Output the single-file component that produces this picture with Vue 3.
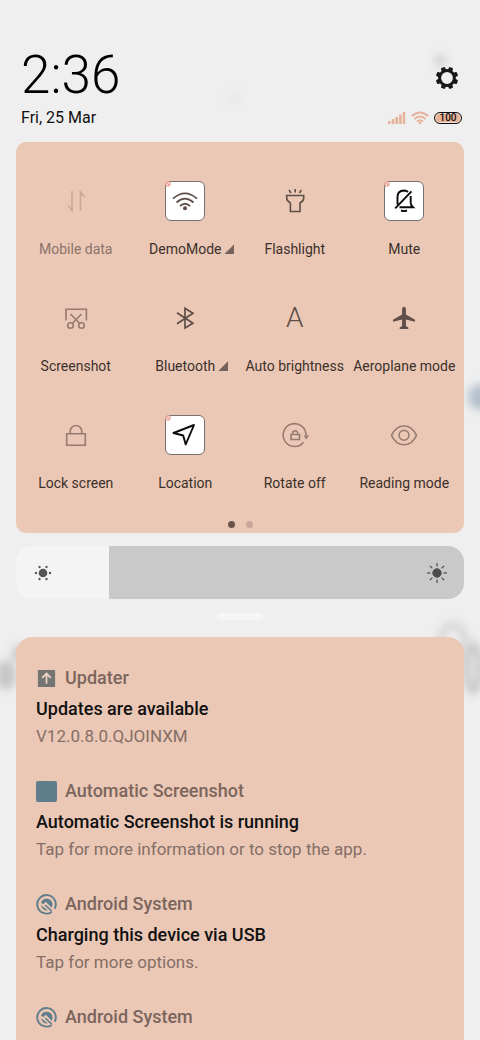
<script setup>
import { ref } from 'vue'

const tiles = ref([
  { id: 'data', label: 'Mobile data', tone: 'faint', disabled: true },
  { id: 'wifi', label: 'DemoMode', on: true, tone: 'dark', more: true },
  { id: 'torch', label: 'Flashlight', tone: 'dark' },
  { id: 'mute', label: 'Mute', on: true, tone: 'black' },
  { id: 'shot', label: 'Screenshot', tone: 'mid' },
  { id: 'bluetooth', label: 'Bluetooth', tone: 'dark', more: true },
  { id: 'auto', label: 'Auto brightness', tone: 'dark' },
  { id: 'plane', label: 'Aeroplane mode', tone: 'dark' },
  { id: 'lock', label: 'Lock screen', tone: 'mid' },
  { id: 'location', label: 'Location', on: true, tone: 'black' },
  { id: 'rotate', label: 'Rotate off', tone: 'mid' },
  { id: 'reading', label: 'Reading mode', tone: 'mid' },
])

const page = ref(0)
const brightness = ref(208)

const notifications = [
  { icon: 'update', app: 'Updater', title: 'Updates are available', body: 'V12.0.8.0.QJOINXM' },
  { icon: 'square', app: 'Automatic Screenshot', title: 'Automatic Screenshot is running', body: 'Tap for more information or to stop the app.' },
  { icon: 'system', app: 'Android System', title: 'Charging this device via USB', body: 'Tap for more options.' },
  { icon: 'system', app: 'Android System', title: 'USB debugging connected' },
]
</script>

<template>
  <main class="shade">
    <div class="wallpaper" aria-hidden="true">
      <i class="smudge s1"></i><i class="smudge s2"></i><i class="smudge s3"></i>
      <i class="smudge s4"></i><i class="smudge s5"></i><i class="smudge s6"></i><i class="smudge s7"></i>
    </div>

    <header class="header">
      <div class="row">
        <time class="clock">2:36</time>
        <button class="settings" type="button" aria-label="Settings">
          <svg viewBox="0 0 24 24" width="24" height="24">
            <circle cx="12" cy="12" r="7.4" fill="none" stroke="#191919" stroke-width="3" />
            <g fill="#191919">
              <rect v-for="n in 8" :key="n" x="9.8" y="0.8" width="4.4" height="4" rx="1" :transform="`rotate(${n * 45 + 22.5} 12 12)`" />
            </g>
          </svg>
        </button>
      </div>
      <div class="row status">
        <span class="date">Fri, 25 Mar</span>
        <span class="indicators">
          <svg viewBox="0 0 18 14" width="18" height="14" fill="#e5b299">
            <rect x="0" y="10" width="2.6" height="3" /><rect x="3.7" y="8" width="2.6" height="5" />
            <rect x="7.4" y="6" width="2.6" height="7" /><rect x="11.1" y="3.5" width="2.6" height="9.5" />
            <rect x="14.8" y="1" width="2.4" height="12" />
          </svg>
          <svg viewBox="0 0 18 14" width="18" height="14" fill="none" stroke="#e5b299" stroke-width="1.9">
            <path d="M.8 5.2Q9-2.4 17.2 5.2M3.5 8Q9 3 14.5 8M6 10.6Q9 8 12 10.6" />
            <circle cx="9" cy="12" r="1.3" fill="#e5b299" stroke="none" />
          </svg>
          <span class="battery">100</span>
        </span>
      </div>
    </header>

    <section class="panel" aria-label="Quick settings">
      <div class="tiles">
        <button v-for="t in tiles" :key="t.id" type="button" class="tile" :disabled="t.disabled" :aria-pressed="!!t.on">
          <span class="icon" :class="[t.tone, { on: t.on }]">
            <span v-if="t.id === 'auto'" class="letter">A</span>
            <svg v-else viewBox="0 0 40 40" width="40" height="40" fill="none" stroke="currentColor" stroke-width="1.6">
              <path v-if="t.id === 'data'" d="M16 10v19.5l-4-5M24.500 30V11l4 5" />
              <g v-else-if="t.id === 'wifi'" stroke-width="1.7">
                <path d="M8 17.700Q20 7 32 17.700M11.500 21.500Q20 13.700 28.500 21.500M15 25Q20 20.500 25 25" />
                <circle cx="20" cy="27.300" r="2" fill="currentColor" stroke="none" />
              </g>
              <path v-else-if="t.id === 'torch'" d="M11.700 14.500h17v2.500q0 3-3.700 5v8.500h-9.600V22q-3.700-2-3.700-5zM20.200 8v3.600M14 9l2 3M26.400 9l-2 3" />
              <g v-else-if="t.id === 'mute'" stroke-width="1.900">
                <path d="M13.500 23.500V16q0-6.200 6.500-6.500 2.500.1 4 1.500M26.700 15v7q0 2.200 2.300 4.200H15.500M11.200 27.300 27.500 10.300M17 29.300q3 1.600 6 0" />
              </g>
              <g v-else-if="t.id === 'shot'">
                <path d="M10 22.500V11.300h20.400v11.200M25.500 16 16.300 25.500M14.500 16l9.200 9.500" />
                <circle cx="14.500" cy="27.500" r="2.800" /><circle cx="25.500" cy="27.500" r="2.800" />
              </g>
              <path v-else-if="t.id === 'bluetooth'" stroke-width="1.700" d="m12 14.700 16 10.600-8 4.800V10.200l8 5-16 10.500" />
              <path v-else-if="t.id === 'plane'" fill="currentColor" stroke="none" d="M20 8.700q1.900 0 1.900 2.200v5.700l9.100 5.200v1.900l-9.100-2.200v6.400l2.400 1.600v1.500h-8.600v-1.500l2.400-1.600v-6.400L9 23.700v-1.900l9.100-5.200v-5.700q0-2.200 1.900-2.200z" />
              <path v-else-if="t.id === 'lock'" d="M10.700 18.700h18.600v11.600H10.700zM14.300 18.700v-2.500a5.700 5.700 0 0 1 11.400 0v2.500" />
              <path v-else-if="t.id === 'location'" stroke-width="1.900" stroke-linejoin="round" d="M8.500 18 29 10 20.700 29.500 18.200 20.500z" />
              <g v-else-if="t.id === 'rotate'">
                <path d="M28.500 27.200A11.400 11.400 0 1 1 31 20.500M16 19.500h8.500v5H16zM17.700 19.500v-1.200a2.500 2.500 0 0 1 5 0v1.200" />
                <path d="M28.500 20.500h5.600l-2.800 4z" fill="currentColor" stroke="none" />
              </g>
              <g v-else>
                <path d="M7.500 20.300Q12 11 20 11t12.500 9.300Q28 29.700 20 29.700T7.500 20.300z" />
                <circle cx="20" cy="20.300" r="4.900" />
              </g>
            </svg>
            <svg v-if="t.on" class="badge" viewBox="0 0 6 6" width="6" height="6" fill="#fbe5df" stroke="#e58f84">
              <circle cx="3" cy="3" r="2.300" /><path d="m1.500 1.500 3 3" />
            </svg>
          </span>
          <span class="label">{{ t.label }}<i v-if="t.more" class="more"></i></span>
        </button>
      </div>
      <nav class="pages" aria-label="Pages">
        <button v-for="n in 2" :key="n" type="button" class="dot" :class="{ current: page === n - 1 }" :aria-label="`Page ${n}`" @click="page = n - 1"></button>
      </nav>
    </section>

    <label class="brightness">
      <input v-model.number="brightness" type="range" min="0" max="1000" aria-label="Brightness" :style="{ '--level': brightness / 10 + '%' }" />
      <svg class="dim" viewBox="0 0 22 22" width="22" height="22" fill="#555">
        <circle cx="11" cy="11" r="4.300" />
        <circle v-for="n in 6" :key="n" cx="18" cy="11" r="1.200" :transform="`rotate(${n * 60} 11 11)`" />
      </svg>
      <svg class="bright" viewBox="0 0 22 22" width="22" height="22" fill="#4c4c4c" stroke="#4c4c4c">
        <circle cx="11" cy="11" r="4.200" />
        <path v-for="n in 8" :key="n" d="M17.500 11H21" stroke-width="1.200" :transform="`rotate(${n * 45} 11 11)`" />
      </svg>
    </label>

    <div class="handle"></div>

    <section class="notifications" aria-label="Notifications">
      <article v-for="(n, i) in notifications" :key="i" class="note">
        <div class="app">
          <svg viewBox="0 0 22 22" width="21" height="21">
            <g v-if="n.icon === 'update'">
              <rect x="2" y="2" width="18" height="18" rx="1" fill="#747473" />
              <path d="M11 16.500V6M6.500 10.300 11 5.800l4.500 4.500" fill="none" stroke="#f2d5c6" stroke-width="1.800" />
            </g>
            <rect v-else-if="n.icon === 'square'" width="22" height="22" rx="2" fill="#607d8b" />
            <g v-else fill="none" stroke="#607d8b">
              <path d="M16.500 18.800A9.700 9.700 0 1 1 19.500 15.500" stroke-width="2" />
              <path d="M5.200 9A6.300 6.300 0 0 1 16.800 8.500 6.300 6.300 0 0 1 16.300 14.300L10.300 8 7.600 10.800z" fill="#607d8b" stroke="none" />
              <path d="M5 11.500 12.500 17.300Q7 18 5 11.500z" fill="#607d8b" stroke="none" />
              <path d="m9.500 11.500 7 6.500" stroke-width="1.600" />
            </g>
          </svg>
          <span>{{ n.app }}</span>
        </div>
        <h2>{{ n.title }}</h2>
        <p v-if="n.body">{{ n.body }}</p>
      </article>
    </section>
  </main>
</template>

<style>
body { background: #efefef; }
</style>

<style scoped>
* { box-sizing: border-box; }
.shade {
  position: relative;
  display: flex;
  flex-direction: column;
  height: 100vh;
  padding: 44px 16px 0;
  overflow: hidden;
  background: #efefef;
  color: #111;
  font-family: Roboto, "Liberation Sans", sans-serif;
}
.shade > :not(.wallpaper) { position: relative; flex-shrink: 0; }
button { padding: 0; border: 0; background: none; color: inherit; font: inherit; }
svg { display: block; }

.wallpaper { position: absolute; inset: 0; overflow: hidden; }
.smudge { position: absolute; border-radius: 50%; filter: blur(4px); }
.s1 { top: 55px; right: 34px; width: 11px; height: 11px; background: #ccc; }
.s2 { top: 94px; left: 231px; width: 8px; height: 8px; background: #e3e3e3; }
.s3 { top: 384px; right: -14px; width: 26px; height: 26px; background: #b4c0cc; }
.s4 { top: 660px; left: -4px; width: 20px; height: 30px; background: #c6c6c6; }
.s5 { top: 645px; left: 12px; width: 12px; height: 18px; background: #c4c4c4; }
.s6 { top: 622px; right: 12px; width: 30px; height: 36px; border: 6px solid #d0d0d0; }
.s7 { top: 642px; right: -4px; width: 22px; height: 52px; border: 8px solid #c4c4c4; }

.header { padding: 0 2px 0 5px; }
.row { display: flex; align-items: center; justify-content: space-between; }
.clock { font-size: 53px; font-weight: 300; line-height: 62px; color: #000; }
.settings { padding: 6px 3px 0; }
.status { height: 24px; }
.date { font-size: 16px; line-height: 24px; }
.indicators { display: flex; align-items: center; gap: 5px; }
.battery {
  width: 28px;
  height: 12px;
  border: 1px solid #111;
  border-radius: 6px;
  background: #e9b296;
  box-shadow: inset 0 0 0 1px #f3e2da;
  color: #111;
  font-size: 10px;
  font-weight: 500;
  line-height: 10px;
  text-align: center;
}

.panel { margin-top: 12px; padding: 32px 5px 5px; border-radius: 10px; background: #ebc8b6; }
.tiles { display: grid; grid-template-columns: repeat(4, minmax(0, 1fr)); }
.tile { display: flex; flex-direction: column; align-items: center; height: 117px; padding-top: 7px; }
.icon {
  position: relative;
  display: flex;
  align-items: center;
  justify-content: center;
  width: 40px;
  height: 40px;
  border: 1px solid transparent;
  border-radius: 6px;
}
.icon > * { flex-shrink: 0; }
.icon.on { border-color: #77706d; background: #fff; }
.faint { color: #cba799; }
.mid { color: #967b70; }
.dark { color: #5f4f48; }
.black { color: #0b0b0b; }
.letter { font-size: 28px; font-weight: 300; line-height: 40px; }
.badge { position: absolute; top: -1px; left: -1px; }
.label {
  display: flex;
  align-items: center;
  gap: 3px;
  margin-top: 18px;
  color: #3c302b;
  font-size: 14px;
  line-height: 20px;
  white-space: nowrap;
}
.tile:disabled .label { color: #8b7268; }
.more { width: 10px; height: 10px; margin-right: -13px; background: #75625a; clip-path: polygon(100% 0, 100% 100%, 0 100%); }
.pages { display: flex; justify-content: center; gap: 11px; height: 7px; margin-top: -4px; }
.dot { width: 7px; height: 7px; border-radius: 50%; background: #c6a799; }
.dot.current { background: #68544c; }

.brightness { display: block; margin-top: 13px; }
.brightness input {
  display: block;
  width: 100%;
  height: 53px;
  margin: 0;
  border-radius: 16px;
  appearance: none;
  background: linear-gradient(to right, #f4f4f4 var(--level), #c9c9c9 var(--level));
}
.brightness input::-webkit-slider-thumb { appearance: none; width: 1px; height: 53px; background: transparent; }
.dim, .bright { position: absolute; top: 16px; pointer-events: none; }
.dim { left: 16px; }
.bright { right: 16px; }

.handle { width: 46px; height: 7px; margin: 14px auto 0; border-radius: 4px; background: #f5f5f5; }

.notifications {
  display: flex;
  flex-direction: column;
  gap: 30px;
  margin-top: 17px;
  padding: 29px 20px;
  border-radius: 16px 16px 0 0;
  background: #ebc8b6;
}
.app { display: flex; align-items: center; gap: 8px; height: 24px; color: #7b655c; font-size: 18px; font-weight: 500; line-height: 24px; }
h2 { margin: 5px 0 0; font-size: 18px; font-weight: 500; line-height: 28px; }
p { margin: 0; color: #846e65; font-size: 17px; line-height: 26px; }
</style>
